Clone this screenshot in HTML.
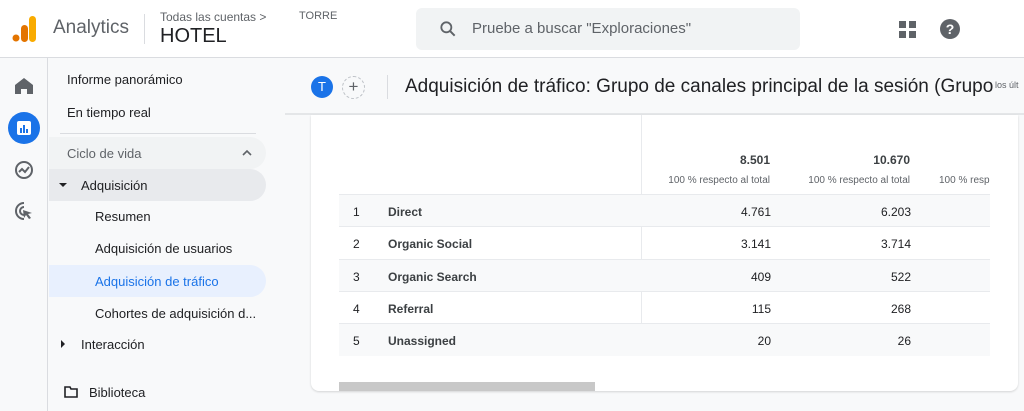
<!DOCTYPE html>
<html><head><meta charset="utf-8"><style>
*{margin:0;padding:0;box-sizing:border-box}
body{width:1024px;height:411px;overflow:hidden;background:#f8f9fa;font-family:"Liberation Sans",Arial,sans-serif;color:#202124;position:relative}
.abs{position:absolute}
.top{left:0;top:0;width:1024px;height:58px;background:#fff;border-bottom:1px solid #dadce0}
.rail{left:0;top:58px;width:48px;height:353px;background:#f8f9fa;border-right:1px solid #dadce0}
.nav{left:49px;top:58px;width:236px;height:353px;background:#f8f9fa}
.nav div{position:absolute;font-size:13px;white-space:nowrap}
.main{left:285px;top:58px;width:739px;height:353px;background:#f8f9fa}
.card{left:311px;top:115px;width:707px;height:276px;background:#fff;border-radius:0 0 8px 8px;box-shadow:0 1px 2px rgba(0,0,0,.15)}
.row{position:absolute;left:339px;width:651px;height:32px;font-size:12px;border-top:1px solid #e8eaed}
.row span{position:absolute;top:10px}
.g{background:#f8f9fa}
</style></head><body>
<div class="abs top">
  <svg class="abs" style="left:12px;top:15px" width="26" height="28"><rect x="17" y="1" width="7" height="26" rx="3.5" fill="#f9ab00"/><rect x="9" y="10" width="7" height="17" rx="3.5" fill="#e37400"/><circle cx="4" cy="23" r="3.5" fill="#e37400"/></svg>
  <div class="abs" style="left:53px;top:17px;font-size:19px;color:#5f6368">Analytics</div>
  <div class="abs" style="left:144px;top:14px;width:1px;height:30px;background:#dadce0"></div>
  <div class="abs" style="left:160px;top:10px;font-size:12px;color:#5f6368">Todas las cuentas &gt;</div>
  <div class="abs" style="left:299px;top:10px;font-size:11px;color:#5f6368">TORRE</div>
  <div class="abs" style="left:160px;top:25px;font-size:20px;color:#202124">HOTEL</div>
  <div class="abs" style="left:416px;top:8px;width:384px;height:42px;background:#f1f3f4;border-radius:6px"></div>
  <svg class="abs" style="left:438px;top:19px" width="20" height="20" viewBox="0 0 24 24"><circle cx="10" cy="10" r="6" fill="none" stroke="#5f6368" stroke-width="2.2"/><path d="M14.5 14.5L20 20" stroke="#5f6368" stroke-width="2.4"/></svg>
  <div class="abs" style="left:472px;top:20px;font-size:15px;color:#5f6368">Pruebe a buscar "Exploraciones"</div>
  <svg class="abs" style="left:899px;top:21px" width="17" height="17"><rect x="0" y="0" width="7" height="7" fill="#5f6368"/><rect x="10" y="0" width="7" height="7" fill="#5f6368"/><rect x="0" y="10" width="7" height="7" fill="#5f6368"/><rect x="10" y="10" width="7" height="7" fill="#5f6368"/></svg>
  <svg class="abs" style="left:940px;top:19px" width="20" height="20"><circle cx="10" cy="10" r="10" fill="#5f6368"/><text x="10" y="15" text-anchor="middle" font-size="14" font-weight="bold" fill="#fff" font-family="Liberation Sans">?</text></svg>
</div>
<div class="abs rail">
  <svg class="abs" style="left:15px;top:20px" width="18" height="16"><path d="M9 0L0 7v9h6v-5h6v5h6V7z" fill="#5f6368"/></svg>
  <div class="abs" style="left:8px;top:54px;width:32px;height:32px;border-radius:50%;background:#1a73e8"></div>
  <svg class="abs" style="left:16px;top:62px" width="16" height="16"><rect x="1" y="1" width="14" height="14" rx="2" fill="#fff"/><rect x="4" y="8" width="2" height="5" fill="#1a73e8"/><rect x="7" y="5" width="2" height="8" fill="#1a73e8"/><rect x="10" y="9" width="2" height="4" fill="#1a73e8"/></svg>
  <svg class="abs" style="left:14px;top:102px" width="20" height="20"><circle cx="10" cy="10" r="8" fill="none" stroke="#5f6368" stroke-width="2"/><path d="M5 12l3-3 3 3 4-5" fill="none" stroke="#5f6368" stroke-width="2"/></svg>
  <svg class="abs" style="left:14px;top:143px" width="20" height="20"><path d="M10 2a8 8 0 1 0 0 16" fill="none" stroke="#5f6368" stroke-width="2"/><path d="M10 6a4 4 0 1 0 0 8" fill="none" stroke="#5f6368" stroke-width="2"/><path d="M9 9l9 3-4 1 3 4-2 1-3-4-2 3z" fill="#5f6368"/></svg>
</div>
<div class="abs nav">
  <div style="left:18px;top:14px">Informe panorámico</div>
  <div style="left:18px;top:47px">En tiempo real</div>
  <div style="left:11px;top:75px;width:196px;height:1px;background:#dadce0"></div>
  <div style="left:0;top:79px;width:217px;height:32px;background:#f1f3f4;border-radius:0 16px 16px 0"></div>
  <div style="left:18px;top:88px;color:#5f6368">Ciclo de vida</div>
  <svg style="position:absolute;left:193px;top:91px" width="10" height="7"><path d="M1 6l4-4 4 4" fill="none" stroke="#5f6368" stroke-width="1.6"/></svg>
  <div style="left:0;top:111px;width:217px;height:32px;background:#e8eaed;border-radius:0 16px 16px 0"></div>
  <svg style="position:absolute;left:10px;top:125px" width="8" height="5"><path d="M0 0h8L4 4z" fill="#202124"/></svg>
  <div style="left:32px;top:120px">Adquisición</div>
  <div style="left:46px;top:151px">Resumen</div>
  <div style="left:46px;top:183px">Adquisición de usuarios</div>
  <div style="left:0;top:207px;width:217px;height:32px;background:#e8f0fe;border-radius:0 16px 16px 0"></div>
  <div style="left:46px;top:216px;color:#1a73e8">Adquisición de tráfico</div>
  <div style="left:46px;top:248px">Cohortes de adquisición d...</div>
  <svg style="position:absolute;left:12px;top:282px" width="5" height="8"><path d="M0 0v8l4-4z" fill="#202124"/></svg>
  <div style="left:32px;top:279px">Interacción</div>
  <svg style="position:absolute;left:15px;top:328px" width="14" height="12"><path d="M1 1h5l1 2h6v8H1z" fill="none" stroke="#202124" stroke-width="1.6"/></svg>
  <div style="left:40px;top:327px">Biblioteca</div>
</div>
<div class="abs main"></div>
<div class="abs" style="left:285px;top:113px;width:739px;height:2px;background:#e4e6e8"></div>
<div class="abs" style="left:311px;top:76px;width:22px;height:22px;border-radius:50%;background:#1a73e8;color:#fff;font-size:13px;text-align:center;line-height:22px">T</div>
<div class="abs" style="left:342px;top:76px;width:23px;height:23px;border-radius:50%;border:1px dashed #bdc1c6;color:#5f6368;font-size:17px;text-align:center;line-height:20px">+</div>
<div class="abs" style="left:387px;top:75px;width:1px;height:24px;background:#dadce0"></div>
<div class="abs" style="left:405px;top:76px;font-size:19px;color:#202124;white-space:nowrap;width:590px;overflow:hidden">Adquisición de tráfico: Grupo de canales principal de la sesión (Grupo</div>
<div class="abs" style="left:995px;top:80px;font-size:9px;color:#5f6368;background:#f8f9fa;width:29px;overflow:hidden;white-space:nowrap">los últ</div>
<div class="abs card"></div>
<div class="abs" style="left:641px;top:115px;width:1px;height:241px;background:#e8eaed"></div>
<div class="abs" style="left:640px;top:153px;width:130px;text-align:right;font-size:12px;font-weight:bold;color:#3c4043">8.501</div>
<div class="abs" style="left:780px;top:153px;width:130px;text-align:right;font-size:12px;font-weight:bold;color:#3c4043">10.670</div>
<div class="abs" style="left:640px;top:175px;width:130px;text-align:right;font-size:10px;color:#5f6368">100 % respecto al total</div>
<div class="abs" style="left:780px;top:175px;width:130px;text-align:right;font-size:10px;color:#5f6368">100 % respecto al total</div>
<div class="abs" style="left:939px;top:175px;width:51px;overflow:hidden;white-space:nowrap;font-size:10px;color:#5f6368">100 % respecto</div>
<div class="row g" style="top:194px"><span style="left:14px">1</span><span style="left:49px;font-weight:bold;color:#3c4043">Direct</span><span style="left:302px;width:130px;text-align:right">4.761</span><span style="left:442px;width:130px;text-align:right">6.203</span></div>
<div class="row" style="top:226px"><span style="left:14px">2</span><span style="left:49px;font-weight:bold;color:#3c4043">Organic Social</span><span style="left:302px;width:130px;text-align:right">3.141</span><span style="left:442px;width:130px;text-align:right">3.714</span></div>
<div class="row g" style="top:259px"><span style="left:14px">3</span><span style="left:49px;font-weight:bold;color:#3c4043">Organic Search</span><span style="left:302px;width:130px;text-align:right">409</span><span style="left:442px;width:130px;text-align:right">522</span></div>
<div class="row" style="top:291px"><span style="left:14px">4</span><span style="left:49px;font-weight:bold;color:#3c4043">Referral</span><span style="left:302px;width:130px;text-align:right">115</span><span style="left:442px;width:130px;text-align:right">268</span></div>
<div class="row g" style="top:323px;height:33px"><span style="left:14px">5</span><span style="left:49px;font-weight:bold;color:#3c4043">Unassigned</span><span style="left:302px;width:130px;text-align:right">20</span><span style="left:442px;width:130px;text-align:right">26</span></div>
<div class="abs" style="left:339px;top:382px;width:256px;height:9px;background:#c8c8c8"></div>
</body></html>
